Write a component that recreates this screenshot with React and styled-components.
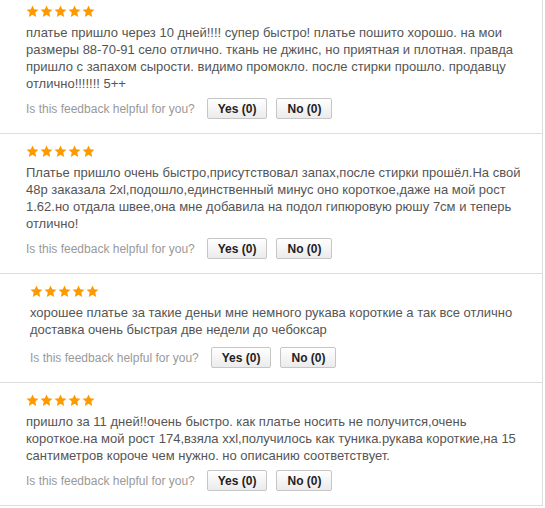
import React from 'react'
import styled, { createGlobalStyle } from 'styled-components'

const Global = createGlobalStyle`
  body {
    margin: 0;
    background: #fff;
    font-family: "Liberation Sans", Arial, sans-serif;
  }
`

const List = styled.div`
  width: 542px;
  border-right: 1px solid #ddd;
`

const Review = styled.div`
  padding: ${props => (props.first ? '5px' : '11px')} 0 14px ${props => props.indent || 26}px;
  border-bottom: 1px solid #ddd;
`

const Stars = styled.div`
  display: flex;
  gap: 1px;
  height: 13px;
  margin-bottom: 6px;
`

const Body = styled.div`
  font-size: 13px;
  line-height: 17px;
  color: #555;
`

const Line = styled.span`
  display: block;
  white-space: nowrap;
`

const Feedback = styled.div`
  display: flex;
  align-items: center;
  margin-top: ${props => props.gap || 6}px;
`

const Label = styled.span`
  font-size: 12px;
  color: #999;
  margin-right: 12px;
`

const Button = styled.button`
  height: 21px;
  padding: 0 10px;
  margin-right: 9px;
  font-family: "Liberation Sans", Arial, sans-serif;
  font-size: 12px;
  font-weight: bold;
  color: #222;
  background: linear-gradient(to bottom, #ffffff, #ebebeb);
  border: 1px solid #c6c6c6;
  border-radius: 2px;
  cursor: pointer;
`

const Star = () => (
  <svg width="13" height="13" viewBox="0 0 24 24">
    <polygon
      fill="#ff9900"
      points="12,1 15.2,8 23,8.8 17.1,14 18.8,22 12,17.9 5.2,22 6.9,14 1,8.8 8.8,8"
    />
  </svg>
)

const reviews = [
  {
    lines: [
      'платье пришло через 10 дней!!!! супер быстро! платье пошито хорошо. на мои',
      'размеры 88-70-91 село отлично. ткань не джинс, но приятная и плотная. правда',
      'пришло с запахом сырости. видимо промокло. после стирки прошло. продавцу',
      'отлично!!!!!!! 5++',
    ],
  },
  {
    lines: [
      'Платье пришло очень быстро,присутствовал запах,после стирки прошёл.На свой',
      '48р заказала 2xl,подошло,единственный минус оно короткое,даже на мой рост',
      '1.62.но отдала швее,она мне добавила на подол гипюровую рюшу 7см и теперь',
      'отлично!',
    ],
  },
  {
    indent: 30,
    gap: 9,
    lines: [
      'хорошее платье за такие деньи мне немного рукава короткие а так все отлично',
      'доставка очень быстрая две недели до чебоксар',
    ],
  },
  {
    lines: [
      'пришло за 11 дней!!очень быстро. как платье носить не получится,очень',
      'короткое.на мой рост 174,взяла xxl,получилось как туника.рукава короткие,на 15',
      'сантиметров короче чем нужно. но описанию соответствует.',
    ],
  },
]

const App = () => (
  <List>
    <Global />
    {reviews.map((r, i) => (
      <Review key={i} first={i === 0} indent={r.indent}>
        <Stars>
          {[0, 1, 2, 3, 4].map(s => (
            <Star key={s} />
          ))}
        </Stars>
        <Body>
          {r.lines.map((l, j) => (
            <Line key={j}>{l}</Line>
          ))}
        </Body>
        <Feedback gap={r.gap}>
          <Label>Is this feedback helpful for you?</Label>
          <Button>Yes (0)</Button>
          <Button>No (0)</Button>
        </Feedback>
      </Review>
    ))}
  </List>
)

export default App
